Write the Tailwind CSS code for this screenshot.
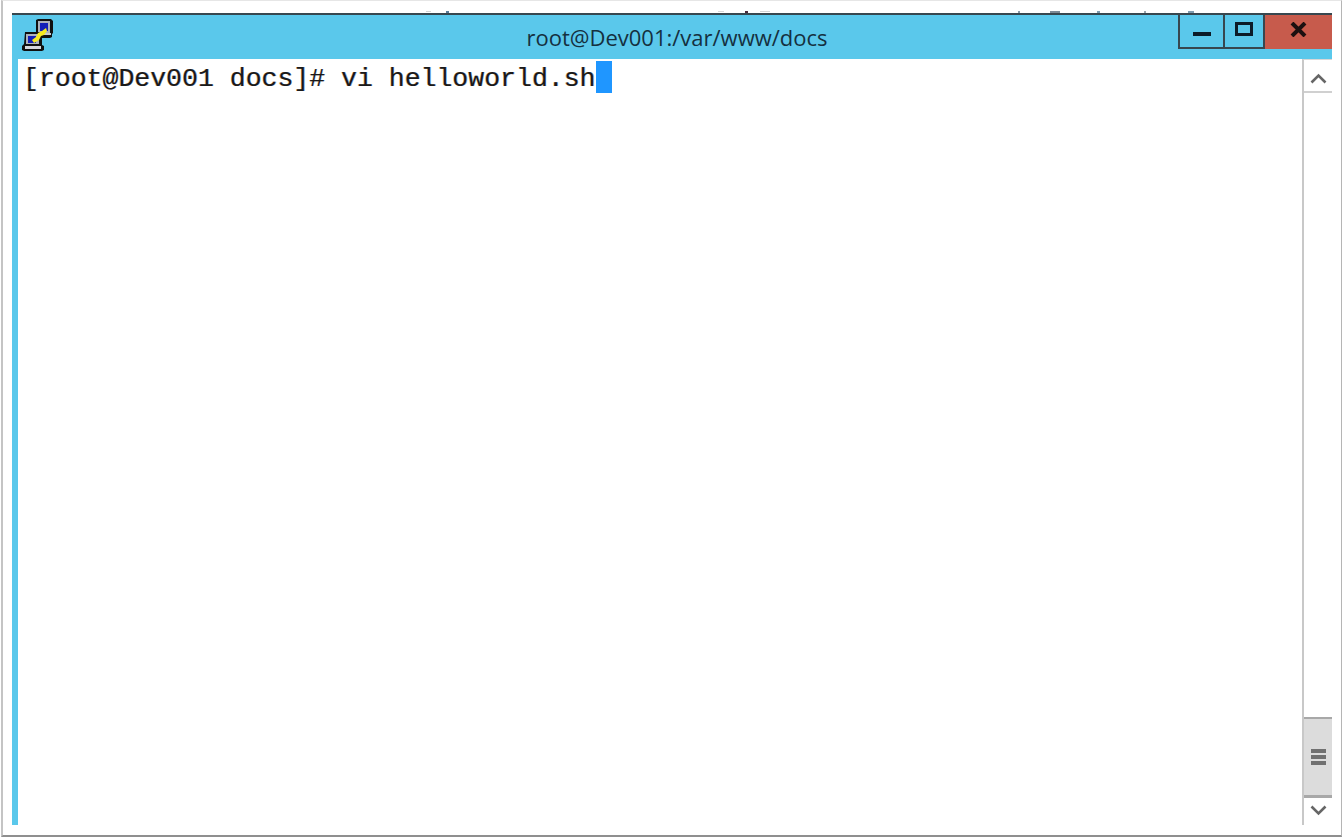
<!doctype html>
<html>
<head>
<meta charset="utf-8">
<script src="https://cdn.jsdelivr.net/npm/@tailwindcss/browser@4"></script>
</head>
<body class="bg-white">
<div class="w-[1344px] h-[838px] overflow-hidden bg-white relative">
  <div class="ml-[1px] w-[1341px] h-[837px] bg-white border-l-2 border-r border-b-2 border-t border-l-[#c4c4c4] border-r-[#b5b5b5] border-b-[#8f8f8f] border-t-[#e6e6e6] pl-[9px] pt-[12px]">
    <div class="w-[1320px] h-[812px] flex flex-col">
      <div class="h-[46px] shrink-0 bg-[#5ac8eb] border-t-2 border-[#37474f] relative flex items-center justify-center">
        <svg class="absolute left-[10px] top-[3px]" width="32" height="34" viewBox="0 0 32 34">
          <path d="M14 2l2-1h13l2 2v12l-1 1v3l-2 1H19v-4h-5z" fill="#101010"/>
          <path d="M16 3h12v12H16z" fill="#aeb2bb"/>
          <path d="M18 5h8v8h-8z" fill="#1420b8"/>
          <path d="M28 15h1v2H19v-2z" fill="#c8cad0"/>
          <path d="M3 14h15l2 2v11l2 1v4l-2 1H2l-2-1v-4l2-2z" fill="#101010"/>
          <path d="M4 16h13v10H4z" fill="#aeb2bb"/>
          <path d="M6 18h8v7H6z" fill="#1420b8"/>
          <path d="M3 28h16v3H3z" fill="#d5d7dc"/>
          <path d="M10 22l4-3 2-4 4-2 4-3 1 3-3 4-3 1-2 4-5 3z" fill="#f6ea20"/>
        </svg>
        <span class="text-[22px] leading-none text-[#15303f] font-['Open_Sans','Noto_Sans',sans-serif] relative left-[5px]">root@Dev001:/var/www/docs</span>
        <div class="absolute left-[1166px] top-0 h-[34px] w-[154px] flex">
          <div class="w-[45px] border-l-2 border-b-2 border-[#37474f] flex items-center justify-center">
            <div class="w-[18px] h-[4px] bg-[#0c1c28] mt-[6px]"></div>
          </div>
          <div class="w-[42px] border-l-2 border-b-2 border-r-2 border-[#37474f] flex items-center justify-center">
            <div class="w-[18px] h-[14px] border-[3px] border-[#0c1c28] mb-[4px]"></div>
          </div>
          <div class="flex-1 bg-[#c75b4c] flex items-center justify-center pb-[5px]">
            <svg width="17" height="15" viewBox="0 0 17 15"><path d="M2 1l13 13M15 1L2 14" stroke="#1c1010" stroke-width="4" fill="none"/></svg>
          </div>
        </div>
      </div>
      <div class="flex-1 flex min-h-0">
        <div class="w-[6px] bg-[#5ac8eb]"></div>
        <div class="w-[1284px] bg-white">
          <div class="pl-[5px] pt-[2px] flex items-start font-['Liberation_Mono',monospace] text-[26.5px] leading-none text-[#1a1a1a] whitespace-pre">
            <span class="pt-[5px] [text-shadow:-0.6px_0_0_#c8964690,0.6px_0_0_#4678c890]">[root@Dev001 docs]# vi helloworld.sh</span>
            <span class="w-[16px] h-[32px] bg-[#1f96ff]"></span>
          </div>
        </div>
        <div class="w-[30px] border-l-2 border-t border-l-[#c8c8c8] border-t-[#d8d8d8] flex flex-col">
          <div class="h-[33px] border-b-2 border-[#d0d0d0] flex items-center justify-center pt-[5px]">
            <svg width="17" height="11" viewBox="0 0 17 11"><path d="M1.5 9.5L8.5 2.5l7 7" stroke="#666" stroke-width="2.6" fill="none"/></svg>
          </div>
          <div class="flex-1"></div>
          <div class="h-[81px] bg-[#dcdcdc] border-t-2 border-b-3 border-[#a8a8a8] flex flex-col items-center justify-center gap-[2px]">
            <div class="w-[15px] h-[4px] bg-[#707070]"></div>
            <div class="w-[15px] h-[4px] bg-[#707070]"></div>
            <div class="w-[15px] h-[4px] bg-[#707070]"></div>
          </div>
          <div class="h-[27px] flex items-center justify-center pb-[3px]">
            <svg width="17" height="11" viewBox="0 0 17 11"><path d="M1.5 1.5L8.5 8.5l7-7" stroke="#666" stroke-width="2.6" fill="none"/></svg>
          </div>
        </div>
      </div>
    </div>
  </div>
  <span class="absolute left-[446px] top-[11px] w-[3px] h-[2px] bg-[#5b7d9a]"></span>
  <span class="absolute left-[426px] top-[11px] w-[5px] h-[1px] bg-[#d4d4d4]"></span>
  <span class="absolute left-[745px] top-[11px] w-[3px] h-[2px] bg-[#4a2a3a]"></span>
  <span class="absolute left-[718px] top-[11px] w-[6px] h-[1px] bg-[#d8d8d8]"></span>
  <span class="absolute left-[760px] top-[11px] w-[10px] h-[1px] bg-[#d4d4d4]"></span>
  <span class="absolute left-[1018px] top-[11px] w-[2px] h-[2px] bg-[#8a9aa8]"></span>
  <span class="absolute left-[1050px] top-[11px] w-[10px] h-[2px] bg-[#7c8a96]"></span>
  <span class="absolute left-[1097px] top-[11px] w-[3px] h-[2px] bg-[#7f9cb0]"></span>
  <span class="absolute left-[1144px] top-[11px] w-[2px] h-[2px] bg-[#9aa6ae]"></span>
  <span class="absolute left-[1188px] top-[11px] w-[6px] h-[2px] bg-[#7f9cb0]"></span>
</div>
</body>
</html>
